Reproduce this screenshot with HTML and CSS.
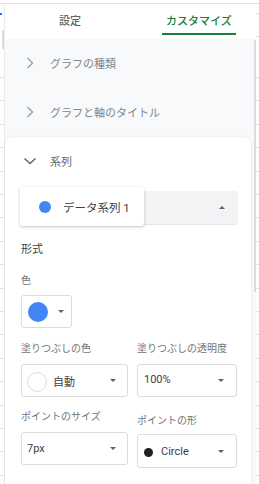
FILE: index.html
```html
<!DOCTYPE html>
<html lang="ja">
<head>
    <meta charset="UTF-8">
    <meta name="viewport" content="width=device-width, initial-scale=1.0">
    <title>グラフエディタ - カスタマイズ</title>
    <link rel="stylesheet" href="styles.css">
</head>
<body>
    <div class="page">
        <div class="edge edge-left">
            <div class="sel-mark"></div>
            <div class="edge-thumb"></div>
            <div class="rows"></div>
        </div>

        <div class="panel">
            <div class="tabs">
                <div class="tab">設定</div>
                <div class="tab active">カスタマイズ</div>
            </div>

            <div class="panel-body">
                <div class="section">
                    <svg class="chev" width="12" height="12" viewBox="0 0 12 12"><path d="M3.5 1 L8.5 6 L3.5 11" fill="none" stroke="#9aa0a6" stroke-width="1.4"/></svg>
                    <span>グラフの種類</span>
                </div>
                <div class="section">
                    <svg class="chev" width="12" height="12" viewBox="0 0 12 12"><path d="M3.5 1 L8.5 6 L3.5 11" fill="none" stroke="#9aa0a6" stroke-width="1.4"/></svg>
                    <span>グラフと軸のタイトル</span>
                </div>

                <div class="card">
                    <div class="section open">
                        <svg class="chev" width="12" height="12" viewBox="0 0 12 12"><path d="M0.5 3.5 L6 8.5 L11.5 3.5" fill="none" stroke="#5f6368" stroke-width="1.4"/></svg>
                        <span>系列</span>
                    </div>

                    <div class="series-select">
                        <span class="arrow-up"></span>
                        <div class="series-menu">
                            <span class="dot blue-dot"></span>
                            <span>データ系列 1</span>
                        </div>
                    </div>

                    <div class="group-title">形式</div>

                    <div class="label">色</div>
                    <div class="color-btn">
                        <span class="dot swatch"></span>
                        <span class="arrow-down"></span>
                    </div>

                    <div class="fields">
                        <div class="field">
                            <div class="label">塗りつぶしの色</div>
                            <div class="select wide">
                                <span class="value"><span class="dot empty-swatch"></span>自動</span>
                                <span class="arrow-down"></span>
                            </div>
                        </div>
                        <div class="field">
                            <div class="label">塗りつぶしの透明度</div>
                            <div class="select">
                                <span class="value">100%</span>
                                <span class="arrow-down"></span>
                            </div>
                        </div>
                        <div class="field">
                            <div class="label">ポイントのサイズ</div>
                            <div class="select wide">
                                <span class="value">7px</span>
                                <span class="arrow-down"></span>
                            </div>
                        </div>
                        <div class="field shifted">
                            <div class="label">ポイントの形</div>
                            <div class="select tall">
                                <span class="value"><span class="dot shape-dot"></span>Circle</span>
                                <span class="arrow-down"></span>
                            </div>
                        </div>
                    </div>
                </div>
            </div>
        </div>

        <div class="scroll-col">
            <div class="scroll-thumb"></div>
        </div>

        <div class="edge edge-right">
            <div class="rows rows-top"></div>
            <div class="rows"></div>
        </div>
    </div>
</body>
</html>
```

FILE: styles.css
```css
body {
    margin: 0;
    background: white;
    font-family: Roboto, "Noto Sans CJK JP", sans-serif;
    color: #3c4043;
}
.page {
    margin-top: 3px;
    border-top: 1px solid #e3e3e3;
    display: flex;
    height: 480px;
    overflow: hidden;
}

/* spreadsheet edges */
.edge {
    display: flex;
    flex-direction: column;
    width: 4px;
}
.edge-right {
    width: 3px;
}
.rows {
    flex: 1;
    margin-top: 28px;
    background: repeating-linear-gradient(to bottom, #e2e2e2 0 1px, transparent 1px 23.4px);
}
.edge-left .rows {
    margin-top: 28px;
}
.edge-right .rows {
    margin-top: 18px;
}
.edge-right .rows-top {
    flex: none;
    height: 46px;
    margin-top: 9px;
}
.sel-mark {
    margin-top: 9px;
    width: 2px;
    height: 2px;
    background: #1a73e8;
}
.edge-thumb {
    margin-top: 15px;
    margin-left: 2px;
    width: 2px;
    height: 19px;
    background: #dadce0;
}

/* side panel */
.panel {
    width: 248px;
    border-left: 1px solid #ebebeb;
    display: flex;
    flex-direction: column;
}
.tabs {
    display: flex;
    gap: 77px;
    padding: 0 0 4px 50px;
    height: 31px;
}
.tab {
    padding: 10px 4px 3px;
    font-size: 11px;
    line-height: 16px;
    font-weight: 500;
    color: #5f6368;
    border-bottom: 2px solid transparent;
}
.tab.active {
    color: #188038;
    border-bottom-color: #188038;
}
.panel-body {
    flex: 1;
    background: #f8f9fa;
    display: flex;
    flex-direction: column;
}
.section {
    display: flex;
    align-items: center;
    height: 47px;
    padding: 0 0 2px 19px;
    gap: 14px;
    font-size: 11px;
    color: #80868b;
}
.section.open {
    height: 48px;
    padding: 0 0 0 3px;
    color: #5f6368;
}

/* series card */
.card {
    flex: 1;
    margin-right: 2px;
    background: white;
    border-radius: 8px 8px 0 0;
    box-shadow: 0 0 2px rgba(60, 64, 67, 0.15);
    padding: 0 0 0 16px;
}
.series-select {
    position: relative;
    margin: 6px 13px 0 0;
    height: 33px;
    background: #f1f3f4;
    border-radius: 4px;
    box-shadow: 0 1px 1px rgba(60, 64, 67, 0.15);
    display: flex;
    align-items: center;
    justify-content: flex-end;
    padding-right: 13px;
}
.series-menu {
    position: absolute;
    left: -1px;
    top: -4px;
    width: 105px;
    height: 39px;
    padding-left: 19px;
    background: white;
    border-radius: 3px;
    box-shadow: 0 1px 3px rgba(60, 64, 67, 0.3);
    display: flex;
    align-items: center;
    gap: 12px;
    font-size: 11.5px;
}
.dot {
    display: inline-block;
    border-radius: 50%;
    flex: none;
}
.blue-dot {
    width: 12px;
    height: 12px;
    background: #4285f4;
}
.arrow-up {
    width: 0;
    height: 0;
    border-left: 3px solid transparent;
    border-right: 3px solid transparent;
    border-bottom: 3px solid #5f6368;
}
.arrow-down {
    width: 0;
    height: 0;
    border-left: 3px solid transparent;
    border-right: 3px solid transparent;
    border-top: 3px solid #5f6368;
}
.group-title {
    margin-top: 18px;
    font-size: 11px;
    line-height: 16px;
    color: #3c4043;
}
.label {
    font-size: 10px;
    line-height: 14px;
    color: #70757a;
}
.group-title + .label {
    margin-top: 16px;
}
.color-btn {
    margin-top: 7px;
    width: 43px;
    height: 31px;
    border: 1px solid #dadce0;
    border-radius: 3px;
    display: flex;
    align-items: center;
    padding-left: 6px;
    gap: 10px;
}
.swatch {
    width: 20px;
    height: 20px;
    background: #4285f4;
}

/* field grid */
.fields {
    display: grid;
    grid-template-columns: 107px 100px;
    column-gap: 9px;
    row-gap: 13px;
    margin-top: 14px;
}
.select {
    margin-top: 8px;
    height: 31px;
    border: 1px solid #dadce0;
    border-radius: 3px;
    display: flex;
    align-items: center;
    justify-content: space-between;
    padding: 0 12px 0 6px;
    font-size: 11px;
    color: #3c4043;
}
.select.wide {
    padding: 0 11px 0 5px;
}
.select .value {
    display: flex;
    align-items: center;
    gap: 6px;
    margin-top: -2px;
}
.select.tall {
    height: 32px;
    margin-top: 6px;
}
.shifted .label {
    margin-top: 4px;
}
.empty-swatch {
    width: 18px;
    height: 18px;
    border: 1px solid #dadce0;
    margin-top: 2px;
}
.shape-dot {
    width: 9px;
    height: 9px;
    background: #202124;
    margin-right: 2px;
    margin-top: 2px;
}
.select.tall .value {
    margin-top: 0;
}
.wide .value {
    margin-top: 0;
}

/* scrollbar */
.scroll-col {
    width: 3px;
    background: linear-gradient(to bottom, white 35px, #f8f9fa 35px);
    padding-top: 36px;
}
.scroll-thumb {
    margin-left: 1px;
    width: 2px;
    height: 252px;
    background: #dadce0;
}
```
